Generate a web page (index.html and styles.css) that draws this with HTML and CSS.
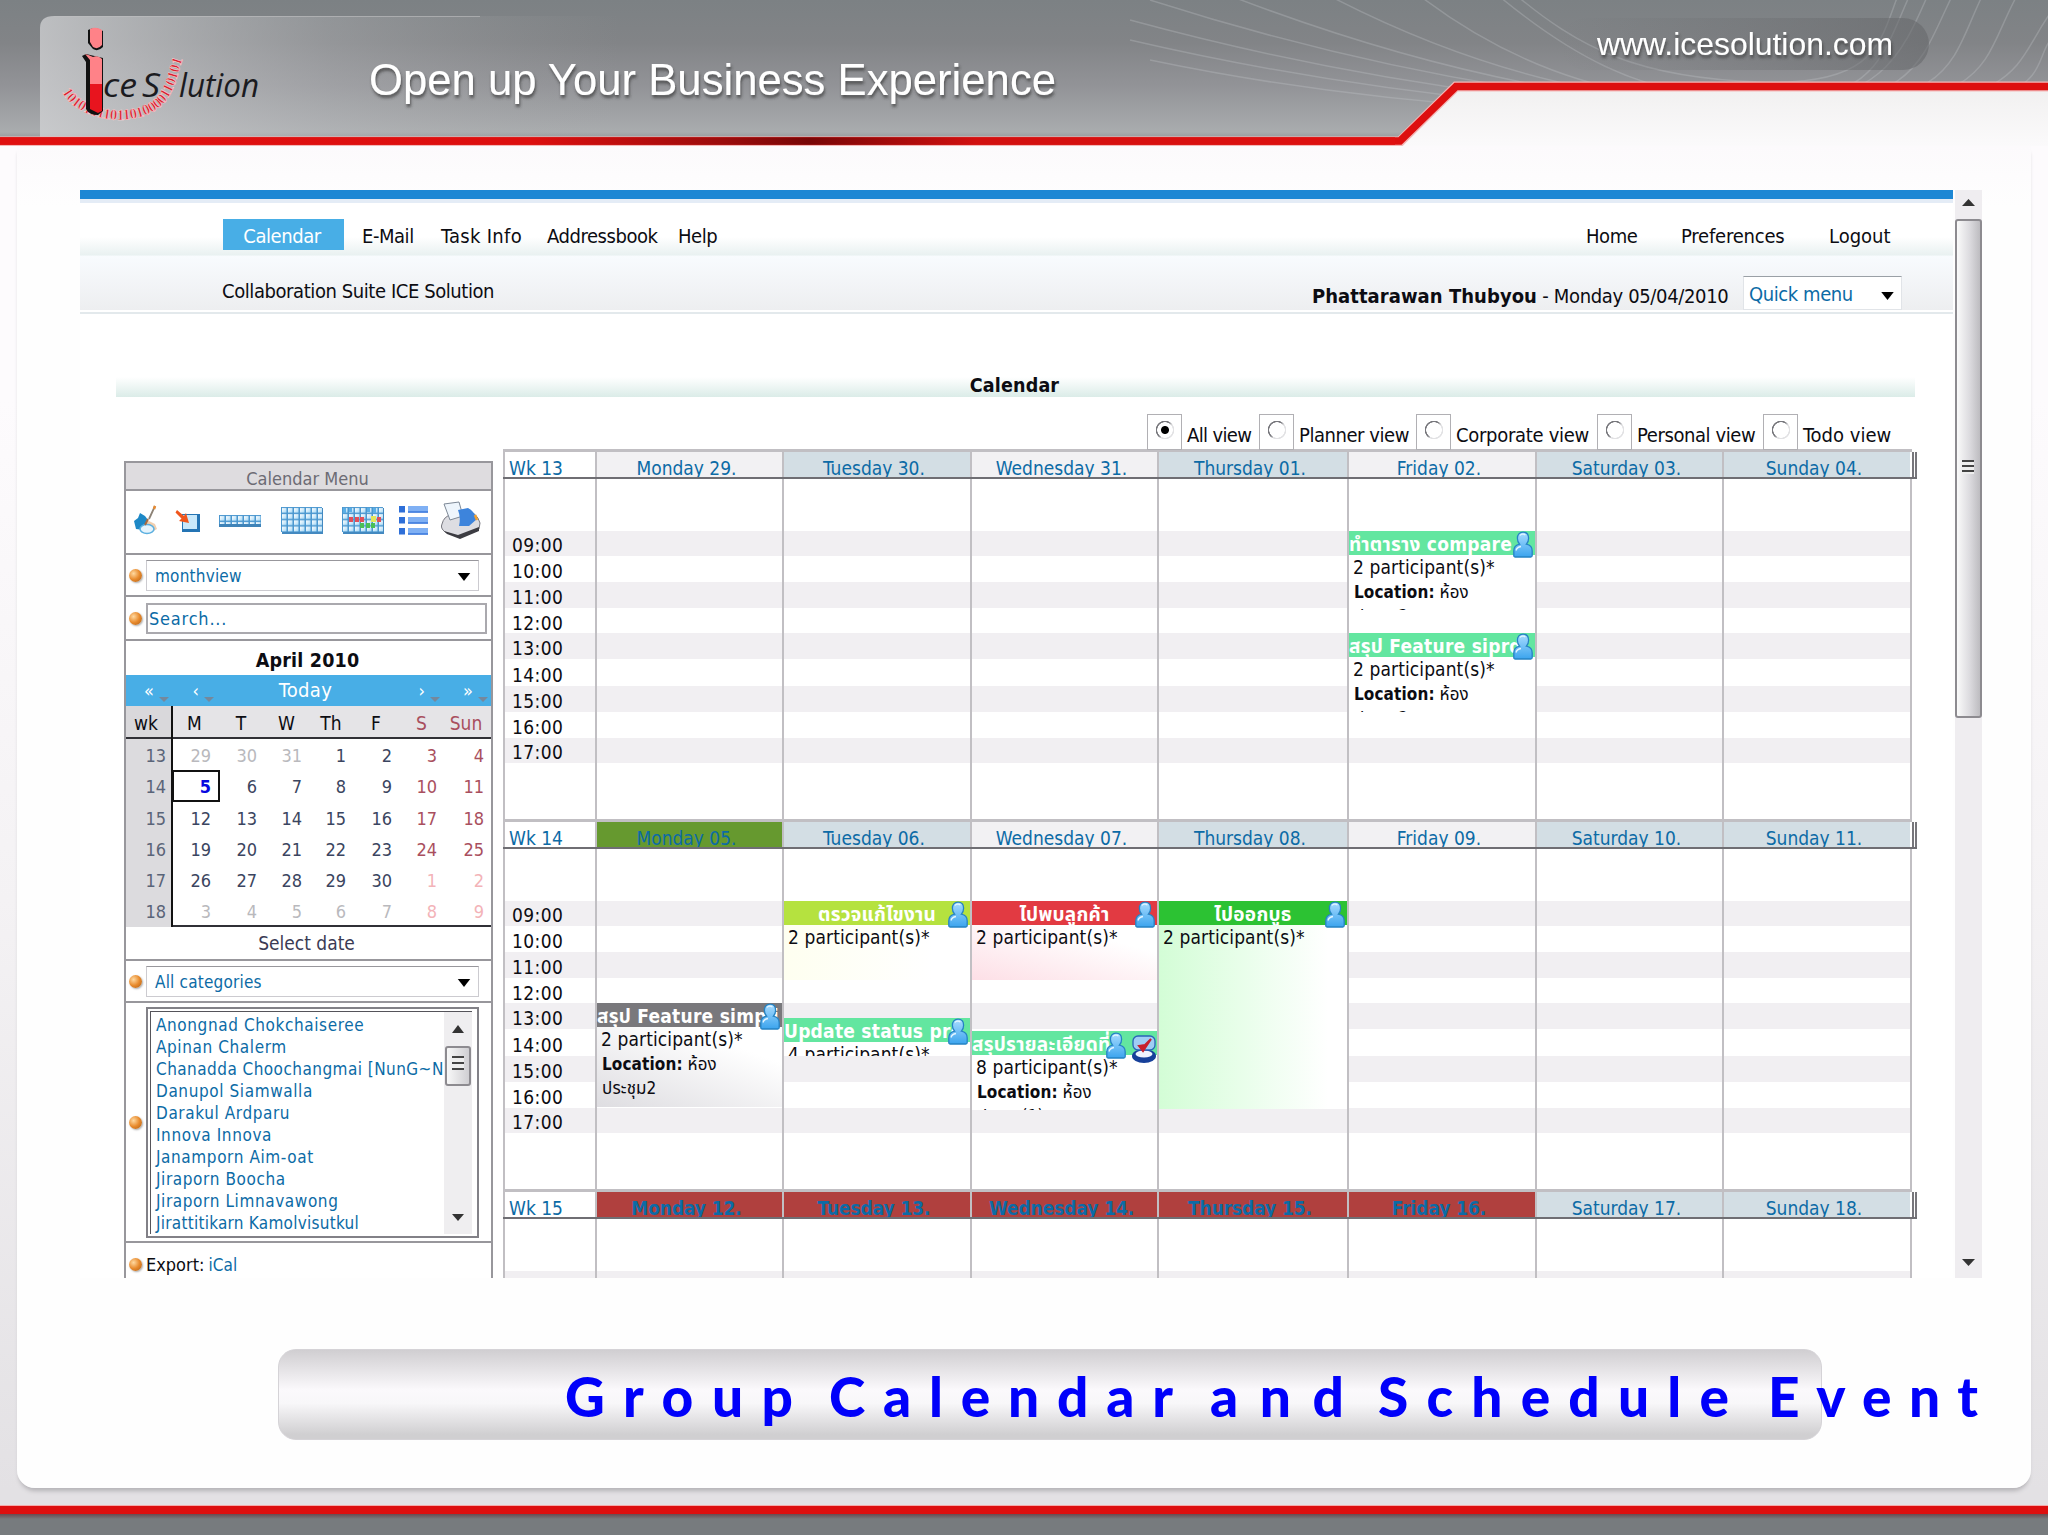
FILE: index.html
```html
<!DOCTYPE html>
<html lang="en">
<head>
<meta charset="utf-8">
<title>Ice Solution - Group Calendar and Schedule Event</title>
<link rel="stylesheet" href="styles.css">
</head>
<body>
<svg class="defs" width="0" height="0">
  <defs>
    <linearGradient id="person-fill" x1="0" y1="0" x2="0" y2="1"><stop offset="0" stop-color="#a9dcff"/><stop offset="1" stop-color="#3ba4ee"/></linearGradient>
    <symbol id="person" viewBox="0 0 22 27">
      <path d="M11 1.2c3.600 0 5.600 2.600 5.600 6 0 2.700-1 4.800-2.200 6 4 .8 5.800 2.800 5.800 6.800V24.500c0 1-.6 1.500-1.500 1.500H3.300c-.9 0-1.500-.5-1.500-1.500V20c0-4 1.800-6 5.800-6.800C6.400 12 5.400 9.900 5.400 7.200c0-3.400 2-6 5.600-6z" fill="url(#person-fill)" stroke="#2583c4" stroke-width="1.300"/>
      <path d="M8 4.500c1-1.600 4-2 5.400-.4M4 19.500c.6-2.600 2.700-3.600 5-4" fill="none" stroke="#e4f5ff" stroke-width="1.300"/>
    </symbol>
    <symbol id="caret" viewBox="0 0 14 9"><path d="M0 0h14L7 9z" fill="#000"/></symbol>
    <linearGradient id="cell" x1="0" y1="0" x2="1" y2="1"><stop offset="0" stop-color="#fff"/><stop offset="1" stop-color="#a5d8f6"/></linearGradient>
    <pattern id="cells" width="6" height="6.200" patternUnits="userSpaceOnUse"><rect width="6" height="6.200" fill="#4b97cf"/><rect x="1" y="1" width="4.500" height="4.700" fill="url(#cell)"/></pattern>
  </defs>
</svg>

<header class="banner">
  <svg width="2048" height="146" viewBox="0 0 2048 146">
    <defs>
      <linearGradient id="bar" x1="0" y1="0" x2="0" y2="1"><stop offset="0" stop-color="#7c8184"/><stop offset=".3" stop-color="#828487"/><stop offset=".6" stop-color="#929397"/><stop offset=".93" stop-color="#a9acae"/><stop offset="1" stop-color="#8b8d90"/></linearGradient>
      <linearGradient id="shine" x1="0" y1="0" x2="1" y2="0"><stop offset="0" stop-color="#d2d3d5" stop-opacity=".75"/><stop offset=".5" stop-color="#c0c1c4" stop-opacity=".3"/><stop offset="1" stop-color="#aaa" stop-opacity="0"/></linearGradient>
      <linearGradient id="red" x1="0" y1="0" x2="1" y2="0"><stop offset="0" stop-color="#e01010"/><stop offset=".38" stop-color="#dd0f0f"/><stop offset=".52" stop-color="#9a0c0c"/><stop offset=".58" stop-color="#780606"/><stop offset=".7" stop-color="#d21010"/><stop offset="1" stop-color="#e01010"/></linearGradient>
      <linearGradient id="under" x1="0" y1="0" x2="0" y2="1"><stop offset="0" stop-color="#ededed"/><stop offset=".6" stop-color="#f1f0f0"/><stop offset="1" stop-color="#fbfafb"/></linearGradient>
      <linearGradient id="pill" x1="0" y1="0" x2="1" y2="0"><stop offset="0" stop-color="#6b6d70" stop-opacity="0"/><stop offset="1" stop-color="#66686b" stop-opacity=".6"/></linearGradient>
      <clipPath id="barclip"><path d="M0 0H2048V84H1455L1402 138H0z"/></clipPath>
      <filter id="drop" x="-5%" y="-20%" width="110%" height="160%"><feDropShadow dx="1" dy="3" stdDeviation="1.500" flood-color="#333" flood-opacity=".7"/></filter>
    </defs>
    <rect width="2048" height="146" fill="url(#under)"/>
    <rect y="138" width="1400" height="8" fill="#fcfafc"/>
    <g clip-path="url(#barclip)">
      <rect width="2048" height="142" fill="url(#bar)"/>
      <path d="M40 138V28Q40 16 54 16H620V138z" fill="url(#shine)"/>
      <path d="M54 16.500H480" stroke="#bfc0c2" stroke-opacity=".6" fill="none"/>
      <g fill="none" stroke="#c9cdd0" stroke-opacity=".28" stroke-width="1.500">
        <path d="M1480 -20C1560 50 1640 100 1760 100S1880 60 1912 -10"/>
        <path d="M1400 -20C1520 80 1640 104 1760 104S1900 60 1930 -10"/>
        <path d="M1300 -20C1480 80 1640 108 1780 106S1920 60 1955 -10"/>
        <path d="M1200 -16C1440 80 1640 112 1800 108S1950 60 1985 -10"/>
        <path d="M1150 0C1400 80 1640 116 1820 110S1980 60 2020 -10"/>
        <path d="M1130 20C1380 88 1640 120 1840 112S2010 60 2060 0"/>
        <path d="M1130 40C1380 98 1640 122 1860 114S2020 60 2060 30"/>
        <path d="M1150 60C1380 108 1640 124 1880 110S2030 70 2060 54"/>
        <path d="M1510 -10C1580 50 1640 78 1760 82S1880 40 1900 -10"/>
      </g>
      <rect x="1560" y="18" width="369" height="52" rx="26" fill="url(#pill)"/>
    </g>
    <path d="M0 141.500H1400L1456 86.500H2048" fill="none" stroke="#f3b8b8" stroke-width="10"/>
    <path d="M0 141H1400L1456 86.500H2048" fill="none" stroke="#dd0f0f" stroke-width="7.500"/>
    <rect y="137.300" width="1395" height="7.500" fill="url(#red)"/>
    <!-- logo -->
    <path id="digits-arc" d="M62 92C80 126 148 130 168 98C178 82 178 70 184 56" fill="none"/>
    <text font-family="Liberation Serif" font-size="15" font-weight="700" fill="#d8202e" stroke="#ffd8da" stroke-width=".5"><textPath href="#digits-arc" textLength="164" lengthAdjust="spacing">10101011011010000110101</textPath></text>
    <path d="M88 30q7-4 15 1v16q-5 5-10 2l-5-6z" fill="#111"/>
    <path d="M90 29q6-3 12 1v15q-4 5-9 2l-3-5z" fill="#ff8288"/>
    <path d="M82 56l4-2 17 4v53l-5 4q-9 0-12-6V62z" fill="#111"/>
    <path d="M85 54q4 1 8 3 5-2 9 2V84H90V60z" fill="#ff8288"/>
    <path d="M90 84h12v27l-4 2-8-4z" fill="#e8141e"/>
    <g font-family="Open Sans, sans-serif" font-style="italic" font-size="32" fill="#1b1b1f">
      <text x="103" y="97" textLength="34" lengthAdjust="spacingAndGlyphs">ce</text>
      <text x="142" y="97" textLength="18" lengthAdjust="spacingAndGlyphs">S</text>
      <text x="179" y="97" textLength="80" lengthAdjust="spacingAndGlyphs">lution</text>
    </g>
    <g font-family="Liberation Sans" fill="#fff" filter="url(#drop)">
      <text x="369" y="95" font-size="44" textLength="687" lengthAdjust="spacingAndGlyphs">Open up Your Business Experience</text>
      <text x="1597" y="55" font-size="32" textLength="296" lengthAdjust="spacingAndGlyphs">www.icesolution.com</text>
    </g>
  </svg>
</header>

<main class="stage">
  <section class="window">
    <div class="page">
      <nav class="nav">
        <a class="tab">Calendar</a><a>E-Mail</a><a class="wide">Task Info</a><a>Addressbook</a><a>Help</a>
        <a>Home</a><a>Preferences</a><a>Logout</a>
      </nav>
      <div class="subbar">
        <span class="suite">Collaboration Suite ICE Solution</span>
        <span class="user"><b>Phattarawan Thubyou</b> - Monday 05/04/2010</span>
        <span class="quick">Quick menu<svg width="13" height="8"><use href="#caret"/></svg></span>
      </div>
      <h1 class="title">Calendar</h1>

      <div class="work">
        <aside class="side">
          <h2>Calendar Menu</h2>
          <div class="tools">
            <svg width="365" height="60" viewBox="0 0 365 60">
              <path d="M30 15l-6 13" stroke="#8c8276" stroke-width="1.800"/><path d="M30 15l-1 3" stroke="#e88a30" stroke-width="2.500"/>
              <path d="M9 30l4-3 2-5 5 3 3 4-4 10-8-1z" fill="#1d88c6"/><path d="M22 29l8 4 2 5-7 4-4-5z" fill="#f2cfae"/><ellipse cx="22" cy="38" rx="7" ry="4.500" fill="#e6f4fc" stroke="#5cb0e0" stroke-width="1.500"/><path d="M20 34l3-6" stroke="#a86a40" stroke-width="2"/>
              <rect x="57" y="23" width="18" height="18" fill="#2474b4"/><rect x="58" y="24" width="14" height="14" fill="#c9e8fa"/><path d="M52 19l7 6 2-3 3 10-10-2 2.500-2.500-6-6z" fill="#f0561c"/>
              <rect x="94" y="24" width="42" height="12" fill="#3f83b8"/><g transform="translate(94 24)"><rect width="42" height="9" fill="url(#cells)"/></g>
              <rect x="157" y="17" width="41" height="26" fill="#4389c0"/><g transform="translate(156 16)"><rect width="41" height="25" fill="url(#cells)"/></g>
              <rect x="218" y="17" width="41" height="26" fill="#4389c0"/><g transform="translate(217 16)"><rect width="41" height="25" fill="url(#cells)"/><path d="M1 1h3v5H1zM7 1h3v4H7zM25 1h3v4h-3zM31 1h3v5h-3z" fill="#5aaee6"/><path d="M7 10h4v5H7zM13 10h4v5h-4zM18 10h4v5h-4zM35 10h4v5h-4z" fill="#e0505a"/><path d="M29 9h5v6h-5z" fill="#e3e65a"/><path d="M18 16h4v5h-4zM24 16h4v5h-4zM29 16h4v5h-4z" fill="#4bbf58"/></g>
              <g fill="#2e6fd8"><rect x="274" y="15" width="6" height="6.500"/><rect x="274" y="26" width="6" height="6.500"/><rect x="274" y="37" width="6" height="6.500"/></g><g fill="#7fb0f4"><rect x="283" y="15" width="20" height="6.500"/><rect x="283" y="26" width="20" height="6.500"/><rect x="283" y="37" width="20" height="6.500"/></g><path d="M283 21h20M283 32h20M283 43h20" stroke="#3b78dc" stroke-width="1.500"/>
              <path d="M317 33q2-8 9-9l14-5q12 2 15 13l-1 6-20 8-14-5q-5-4-3-8z" fill="#dddde2" stroke="#77777f"/><path d="M319 13l15-2 4 14-13 4z" fill="#eef5fc" stroke="#7d8896"/><path d="M333 19l10-2q6 3 9 11l-8 7-10 0q2-8-1-16z" fill="#3d84dc"/><path d="M319 40l14 4 21-8v4l-19 8-13-5z" fill="#3c3c42"/><path d="M350 24l2 5" stroke="#f0a030" stroke-width="2.500"/>
            </svg>
          </div>
          <div class="field"><i class="dot"></i><span class="select">monthview<svg width="14" height="8"><use href="#caret"/></svg></span></div>
          <div class="field search"><i class="dot"></i><span class="input">Search...</span></div>
          <div class="month">April 2010</div>
          <div class="mnav"><span>«</span><i></i><span>‹</span><i></i><b>Today</b><span>›</span><i></i><span>»</span><i></i></div>
          <div class="cal dow"><span>wk</span><span>M</span><span>T</span><span>W</span><span>Th</span><span>F</span><span class="r">S</span><span class="r">Sun</span></div>
          <div class="cal days">
            <span class="w">13</span><span class="g">29</span><span class="g">30</span><span class="g">31</span><span>1</span><span>2</span><span class="r">3</span><span class="r">4</span>
            <span class="w">14</span><span class="today">5</span><span>6</span><span>7</span><span>8</span><span>9</span><span class="r">10</span><span class="r">11</span>
            <span class="w">15</span><span>12</span><span>13</span><span>14</span><span>15</span><span>16</span><span class="r">17</span><span class="r">18</span>
            <span class="w">16</span><span>19</span><span>20</span><span>21</span><span>22</span><span>23</span><span class="r">24</span><span class="r">25</span>
            <span class="w">17</span><span>26</span><span>27</span><span>28</span><span>29</span><span>30</span><span class="p">1</span><span class="p">2</span>
            <span class="w">18</span><span class="g">3</span><span class="g">4</span><span class="g">5</span><span class="g">6</span><span class="g">7</span><span class="p">8</span><span class="p">9</span>
          </div>
          <div class="pick">Select date</div>
          <div class="field cats"><i class="dot"></i><span class="select">All categories<svg width="14" height="8"><use href="#caret"/></svg></span></div>
          <div class="field people"><i class="dot"></i>
            <div class="listbox">
              <ul><li>Anongnad Chokchaiseree</li><li>Apinan Chalerm</li><li>Chanadda Choochangmai [NunG~N]</li><li>Danupol Siamwalla</li><li>Darakul Ardparu</li><li>Innova Innova</li><li>Janamporn Aim-oat</li><li>Jiraporn Boocha</li><li>Jiraporn Limnavawong</li><li>Jirattitikarn Kamolvisutkul</li></ul>
              <div class="minibar"><svg width="12" height="8"><path d="M0 8h12L6 0z" fill="#333"/></svg><span class="grip"></span><svg width="12" height="7"><path d="M0 0h12L6 7z" fill="#333"/></svg></div>
            </div>
          </div>
          <div class="field export"><i class="dot"></i><span>Export: <a>iCal</a></span></div>
        </aside>

        <div class="board">
          <div class="views">
            <label><i class="on"></i>All view</label><label><i></i>Planner view</label><label><i></i>Corporate view</label><label><i></i>Personal view</label><label><i></i>Todo view</label>
          </div>

          <section class="week first">
            <div class="head"><span class="wk">Wk 13</span><span>Monday 29.</span><span class="alt">Tuesday 30.</span><span>Wednesday 31.</span><span class="alt">Thursday 01.</span><span>Friday 02.</span><span class="alt">Saturday 03.</span><span class="alt">Sunday 04.</span><i></i></div>
            <div class="body">
              <ol class="hours"><li>09:00</li><li>10:00</li><li>11:00</li><li>12:00</li><li>13:00</li><li>14:00</li><li>15:00</li><li>16:00</li><li>17:00</li></ol>
              <div class="day"></div><div class="day"></div><div class="day"></div><div class="day"></div>
              <div class="day">
                <article class="ev mint t9 h3"><h3>ทำตาราง compare</h3><svg class="who"><use href="#person"/></svg><p>2 participant(s)*</p><p class="loc"><b>Location:</b> ห้อง<br>ประชุม2</p></article>
                <article class="ev mint t13 h3"><h3>สรุป Feature siprdi</h3><svg class="who"><use href="#person"/></svg><p>2 participant(s)*</p><p class="loc"><b>Location:</b> ห้อง<br>ประชุม2</p></article>
              </div>
              <div class="day"></div><div class="day"></div>
            </div>
          </section>

          <section class="week">
            <div class="head"><span class="wk">Wk 14</span><span class="now">Monday 05.</span><span class="alt">Tuesday 06.</span><span>Wednesday 07.</span><span class="alt">Thursday 08.</span><span>Friday 09.</span><span class="alt">Saturday 10.</span><span class="alt">Sunday 11.</span><i></i></div>
            <div class="body">
              <ol class="hours"><li>09:00</li><li>10:00</li><li>11:00</li><li>12:00</li><li>13:00</li><li>14:00</li><li>15:00</li><li>16:00</li><li>17:00</li></ol>
              <div class="day"><article class="ev gray t13 h4"><h3>สรุป Feature simpli</h3><svg class="who"><use href="#person"/></svg><p>2 participant(s)*</p><p class="loc"><b>Location:</b> ห้อง<br>ประชุม2</p></article></div>
              <div class="day">
                <article class="ev lime mid t9 h3"><h3>ตรวจแก้ไขงาน</h3><svg class="who"><use href="#person"/></svg><p>2 participant(s)*</p></article>
                <article class="ev mint t1330 h15"><h3>Update status pro</h3><svg class="who"><use href="#person"/></svg><p>4 participant(s)*</p></article>
              </div>
              <div class="day">
                <article class="ev red mid t9 h3"><h3>ไปพบลูกค้า</h3><svg class="who"><use href="#person"/></svg><p>2 participant(s)*</p></article>
                <article class="ev mint two t14 h3"><h3>สรุปรายละเอียดที่</h3><svg class="who"><use href="#person"/></svg><svg class="task" viewBox="0 0 26 30"><ellipse cx="13" cy="22" rx="12" ry="7" fill="#16409a"/><ellipse cx="13" cy="20" rx="8.500" ry="3.500" fill="#eef4ff"/><rect x="2" y="2" width="22" height="14" rx="5" fill="#9fcdf4" stroke="#2a63b8" stroke-width="1.300"/><path d="M8 12l4 5 8-12-6 6z" fill="#c8202c" stroke="#c8202c" stroke-width="2"/></svg><p>8 participant(s)*</p><p class="loc"><b>Location:</b> ห้อง<br>ประชุม(1)</p></article>
              </div>
              <div class="day"><article class="ev green mid t9 h8"><h3>ไปออกบูธ</h3><svg class="who"><use href="#person"/></svg><p>2 participant(s)*</p></article></div>
              <div class="day"></div><div class="day"></div><div class="day"></div>
            </div>
          </section>

          <section class="week">
            <div class="head"><span class="wk">Wk 15</span><span class="hol">Monday 12.</span><span class="hol">Tuesday 13.</span><span class="hol">Wednesday 14.</span><span class="hol">Thursday 15.</span><span class="hol">Friday 16.</span><span class="alt">Saturday 17.</span><span class="alt">Sunday 18.</span><i></i></div>
            <div class="body">
              <div></div>
              <div class="day"></div><div class="day"></div><div class="day"></div><div class="day"></div><div class="day"></div><div class="day"></div><div class="day"></div>
            </div>
          </section>
        </div>
      </div>
    </div>
    <div class="scroll"><svg width="13" height="7"><path d="M0 7h13L6.500 0z" fill="#333"/></svg><span class="thumb"></span><svg class="dn" width="13" height="7"><path d="M0 0h13L6.500 7z" fill="#333"/></svg></div>
  </section>

  <div class="caption">
    <svg width="1700" height="91" viewBox="0 0 1700 91" font-family="Lato" font-weight="900" font-size="55" fill="#0000fa">
      <text x="286" y="67" textLength="228">Group</text>
      <text x="550" y="67" textLength="344">Calendar</text>
      <text x="931" y="67" textLength="134">and</text>
      <text x="1099" y="67" textLength="351">Schedule</text>
      <text x="1489" y="67" textLength="210">Event</text>
    </svg>
  </div>
</main>
<footer class="foot"></footer>
</body>
</html>
```
FILE: styles.css
```css
* { box-sizing: border-box; margin: 0; padding: 0; }
body {
  width: 2048px; height: 1535px; overflow: hidden;
  display: flex; flex-direction: column;
  font: 19px "DejaVu Sans Condensed", "Noto Sans Thai", "Noto Sans", sans-serif;
  color: #0c0c12;
  background: linear-gradient(#fdfbfd 400px, #f4f2f4 900px, #e3e1e4 1490px);
}
.defs { position: absolute; }
svg { display: block; flex: none; }
ul, ol { list-style: none; }
a, .head, .select, .input, .listbox, .quick { color: #0c6ba6; }

.banner { height: 146px; flex: none; }
.stage {
  height: 1342px; margin: 0 17px; flex: none;
  background: linear-gradient(#fcfafc, #fefefe 60px);
  border-radius: 0 0 18px 18px;
  box-shadow: 0 5px 4px -2px #b5b3b7;
}
.foot { margin-top: auto; height: 29px; border-top: 8px solid #dd0f0f; background: linear-gradient(#6a4a50, #777b7e 5px); box-shadow: 0 -1px #f6a9a9; }

/* browser window */
.window { display: flex; justify-content: space-between; margin: 44px 0 0 63px; width: 1902px; height: 1088px; overflow: hidden; }
.stage::before { content: ""; display: table; }
.page { width: 1873px; border-top: 9px solid #1d87d4; background: #fff; }
.scroll { width: 27px; background: #efedf0; display: flex; flex-direction: column; align-items: center; padding-top: 9px; }
.thumb { width: 27px; height: 499px; margin-top: 13px; border: 2px solid #8d8b90; border-radius: 3px; background: linear-gradient(90deg, #fafafa, #dcdbdf 55%, #bdbcc0); display: flex; align-items: center; justify-content: center; }
.thumb::after { content: ""; width: 12px; height: 14px; margin: -4px 2px 0 0; background: repeating-linear-gradient(#444 0 2px, #eee 2px 5px); }
.dn { margin: auto 0 12px; }

.nav {
  display: grid; grid-template-columns: 139px 79px 106px 131px 908px 95px 148px auto;
  height: 57px; padding: 20px 0 0 143px; border-top: 4px solid #e4ecf6;
  background: linear-gradient(#fff 34px, #e9f1f1 52px, #f6fafc);
  font-size: 20px; letter-spacing: -.45px; line-height: 34px; margin-top: 0;
}
.nav a { color: #0c0c12; height: 31px; margin-top: -4px; }
.nav .tab { width: 121px; padding-right: 3px; background: #48aee6; color: #fff; text-align: center; }
.nav .wide { letter-spacing: .3px; }
.nav a:nth-child(7) { letter-spacing: -.2px; }
.nav a:nth-child(8) { letter-spacing: 0; }
.subbar {
  display: grid; grid-template-columns: 1090px 431px 159px;
  height: 58px; padding-left: 142px; border-bottom: 2px solid #e3e9ec;
  background: linear-gradient(#f8fbfe, #edeef0 54px, #fff 54px);
  font-size: 20px; letter-spacing: -.42px; line-height: 26px;
}
.suite { padding-top: 22px; }
.user { padding-top: 27px; white-space: nowrap; letter-spacing: -.35px; }
.user b { letter-spacing: .05px; }
.quick { margin-top: 20px; height: 34px; padding: 2px 7px 0 5px; line-height: 31px; display: flex; justify-content: space-between; align-items: center; background: #fff; border: 1px solid #e1e4e8; border-top: 1px solid #9aa0a6; }
.quick svg { margin-top: 3px; }
.title { margin: 63px 38px 0 36px; height: 20px; padding-right: 2px; background: linear-gradient(#fff, #dbece8); font-size: 19.500px; letter-spacing: .15px; line-height: 17px; text-align: center; color: #0c0c12; }

.work { display: flex; align-items: flex-start; }

/* sidebar */
.side { width: 369px; margin: 64px 0 0 44px; border: 2px solid #98979c; background: #fff; height: 900px; font-size: 18px; }
.side > * { border-bottom: 2px solid #98979c; }
.side h2 { height: 28px; background: #dedcdf; color: #6c6b74; font-weight: 400; font-size: 18px; line-height: 31px; padding-right: 2px; text-align: center; }
.tools { height: 64px; }
.tools svg { margin-left: -1px; }
.field { height: 42px; display: flex; align-items: center; padding-left: 3px; }
.dot { flex: none; width: 13px; height: 13px; margin-right: 4px; border-radius: 50%; background: radial-gradient(circle at 35% 35%, #ffd9a0, #e88a2c 50%, #a85c18); box-shadow: 1px 1px 2px #aaa; }
.select { width: 333px; height: 31px; padding: 2px 7px 0 8px; border: 1px solid #cccbd0; border-top-color: #98979c; display: flex; align-items: center; justify-content: space-between; font-size: 17px; letter-spacing: .2px; }
.select svg { margin-top: 2px; }
.search { height: 44px; }
.input { width: 341px; height: 31px; border: 2px solid #aaa9ae; line-height: 28px; padding-left: 1px; font-size: 18px; letter-spacing: .8px; }
.month { height: 34px; border: 0; line-height: 39px; font-weight: 700; font-size: 19.500px; letter-spacing: .2px; padding-right: 2px; text-align: center; }
.mnav { height: 31px; border: 0; display: grid; grid-template-columns: 33px 14px 31px 16px 173px 37px 10px 38px 14px; align-items: center; background: #48aee6; color: #fff; font-size: 18px; text-align: center; }
.mnav b { font-weight: 400; font-size: 20px; letter-spacing: .4px; line-height: 31px; padding-right: 2px; }
.mnav span { text-align: right; padding-right: 5px; line-height: 28px; }
.mnav i { border: 5px solid transparent; border-top-color: #75889c; border-bottom: 0; width: 10px; margin: 18px 0 0 0; }
.cal { display: grid; grid-template-columns: 47px 47px 46px 45px 44px 46px 45px 45px; margin-right: 0; }
.dow { height: 33px; background: linear-gradient(#d9d8db, #d9d8db) 0 0/47px no-repeat, #e5e4e7; line-height: 34px; text-align: center; border-color: #303036; font-size: 19px; }
.dow span { padding-right: 4px; }
.dow span:first-child { border-right: 2px solid #111; padding-right: 5px; }
.dow span:last-child { padding: 0; margin: 0 0 0 -5px; }
.days { grid-auto-rows: 31.300px; border-color: #303036; text-align: right; line-height: 34px; color: #3b4560; padding-bottom: 0; height: 188px; }
.days span { padding-right: 9px; }
.days .w { background: #dcdbde; color: #5a6478; border-right: 2px solid #111; padding-right: 5px; }
.r, .days .r { color: #a94f5e; }
.days span:nth-child(8n) { padding-right: 7px; }
.days .g { color: #b9b9bd; }
.days .p { color: #f3b3b8; }
.days .today { border: 2px solid #111; margin-left: -1px; color: #0808e0; font-weight: 700; line-height: 30px; padding-right: 7px; }
.pick { height: 34px; line-height: 32px; text-align: center; color: #3b3b55; font-size: 19px; padding-right: 4px; }
.people { height: 240px; }
.listbox { width: 333px; height: 231px; border: 2px solid #828187; outline: 0; padding: 2px; display: flex; }
.listbox ul { width: 294px; flex: none; overflow: hidden; white-space: nowrap; border: solid #55545a; border-width: 1px 0 0 1px; padding: 2px 0 0 5px; font-size: 17px; line-height: 22px; letter-spacing: .6px; }
.listbox li:nth-child(3) { letter-spacing: .45px; }
.listbox li:nth-child(10) { letter-spacing: .25px; }
.minibar { width: 28px; border-top: 1px solid #55545a; background: #efeef0; display: flex; flex-direction: column; align-items: center; padding: 13px 0 13px; }
.grip { width: 26px; height: 40px; margin: 13px 0 auto; border: 2px solid #8d8b90; border-radius: 3px; background: repeating-linear-gradient(#444 0 2px, #eee 2px 6px) 50% 40%/12px 14px no-repeat, linear-gradient(90deg, #f8f8f8, #cfced2); }
.export { height: 42px; border: 0; font-size: 18px; letter-spacing: 0; }
.export a { font-size: 17px; margin-left: -1px; }

/* schedule */
.board { margin-left: 10px; }
.views { height: 52px; padding: 17px 0 0 644px; display: grid; grid-template-columns: 112px 157px 181px 166px auto; font-size: 20px; letter-spacing: -.65px; white-space: nowrap; }
.views label { display: flex; line-height: 43px; }
.views label:nth-child(2) { letter-spacing: -.45px; }
.views label:nth-child(3) { letter-spacing: -.3px; }
.views label:nth-child(4) { letter-spacing: -.4px; }
.views label:nth-child(5) { letter-spacing: 0; }
.views i { flex: none; width: 35px; height: 36px; margin-right: 5px; border: 1.500px solid #b1b0b4; background: radial-gradient(circle at 17px 15px, #fff 7.500px, transparent 8px), radial-gradient(circle at 17px 15px, transparent 9px, #fff 9.500px), conic-gradient(from 225deg at 17px 15px, #77777c 0 160deg, #e2e2e4 190deg 340deg, #77777c); }
.views i.on { background: radial-gradient(circle at 17px 15px, #000 3.500px, #fff 4.500px, #fff 7.500px, transparent 8px), radial-gradient(circle at 17px 15px, transparent 9px, #fff 9.500px), conic-gradient(from 225deg at 17px 15px, #77777c 0 160deg, #e2e2e4 190deg 340deg, #77777c); }

.week { height: 370px; border-top: 3px solid #c1bfc3; width: 1409px; }
.head, .body { display: grid; grid-template-columns: 92px 187px 188px 187px 190px 188px 187px 188px auto; }
.head { width: 1414px; height: 27px; border-bottom: 2px solid #6f6e73; text-align: center; line-height: 33px; overflow: hidden; }
.head span { background: #f2f1f3; border-left: 2px solid #c1bfc3; padding-right: 6px; }
.head .wk { background: #fff; text-align: left; padding-left: 4px; }
.head .alt { background: #d3dee4; }
.head .now { background: #66992f; }
.head .hol { background: #b0403e; font-weight: 700; letter-spacing: -.1px; }
.head i { border: solid #77767b; border-width: 0 2px; width: 5px; margin-left: 2px; background: #fff; }
.body {
  height: 340px; border: solid #c1bfc3; border-width: 0 2px 0 2px;
  background: linear-gradient(#f1eff2, #f1eff2) 0 52px/100% 25px no-repeat, linear-gradient(#f1eff2, #f1eff2) 0 103px/100% 26px no-repeat, linear-gradient(#f1eff2, #f1eff2) 0 154px/100% 26px no-repeat, linear-gradient(#f1eff2, #f1eff2) 0 207px/100% 26px no-repeat, linear-gradient(#f1eff2, #f1eff2) 0 259px/100% 25px no-repeat, #fff;
  grid-template-columns: 90px 187px 188px 187px 190px 188px 187px 188px;
}
.hours { padding: 52px 0 0 7px; display: grid; grid-template-rows: 26px 26px 26px 25px 27px 26px 26px 25px 26px; align-content: start; line-height: 29px; letter-spacing: .4px; }
.day { border-left: 2px solid #c1bfc3; position: relative; }

.ev { position: absolute; left: 0; right: 0; overflow: hidden; background: #fff; }
.ev h3 { height: 24px; line-height: 27px; overflow: hidden; white-space: nowrap; font-size: 19px; color: #fff; letter-spacing: .25px; }
.ev.mid h3 { text-align: center; }
.ev p { padding-left: 4px; line-height: 25px; letter-spacing: .1px; white-space: nowrap; }
.ev .loc { font-size: 17px; line-height: 24px; padding-left: 5px; margin-top: 0; }
.who { position: absolute; right: 1px; top: 0; width: 22px; height: 27px; }
.two .who { right: 30px; top: 1px; }
.task { position: absolute; right: 0; top: 3px; width: 26px; height: 30px; }
.t9 { top: 52px; } .t13 { top: 154px; } .t1330 { top: 169px; } .t14 { top: 182px; }
.h15 { height: 38px; } .h3 { height: 79px; } .h4 { height: 104px; } .h8 { height: 208px; }
.mint h3 { background: #63e6a0; }
.gray { background: linear-gradient(200deg, #fff 35%, #dedde1); } .gray h3 { background: #79787c; }
.lime { background: linear-gradient(90deg, #fefff0, #fff 80%); } .lime h3 { background: #b5e23f; }
.red { background: linear-gradient(195deg, #fff 40%, #fddfe6); } .red h3 { background: #e23a42; }
.green { background: linear-gradient(90deg, #d3fdd6, #fff 90%); } .green h3 { background: #2cc233; }

.caption { width: 1544px; height: 91px; margin: 71px 0 0 261px; border-radius: 18px; border: 1px solid #d5d3d7; background: linear-gradient(#d0ced1, #fbf9fc 45%, #f8f7f9 60%, #d0cfd1 95%); }
.caption svg { overflow: visible; }
```
